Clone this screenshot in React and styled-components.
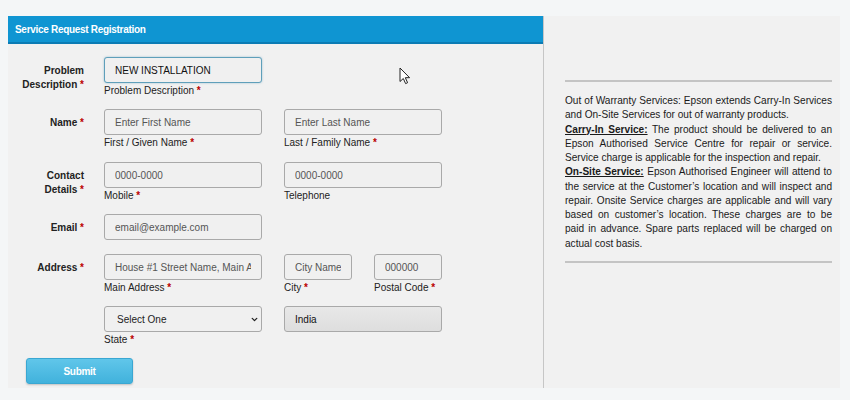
import styled, { createGlobalStyle } from "styled-components";
import { ChevronDown } from "lucide-react";

const GlobalStyle = createGlobalStyle`
  body {
    margin: 0;
    background: #f4f6f7;
    font-family: "Liberation Sans", Arial, sans-serif;
  }
`;

const Page = styled.div`
  padding: 16px 10px 12px 8px;
`;

const Frame = styled.div`
  position: relative;
  display: flex;
  height: 372px;
  background: #f1f1f1;
`;

const FormPanel = styled.div`
  width: 535px;
  display: flex;
  flex-direction: column;
  border-right: 1px solid #c6c6c6;
`;

const Header = styled.div`
  height: 28px;
  box-sizing: border-box;
  display: flex;
  align-items: center;
  padding-left: 7px;
  background: #0f95d2;
  border-bottom: 2px solid #0b7bb4;
  color: #fff;
  font-size: 10px;
  font-weight: 700;
  letter-spacing: -0.3px;
`;

const Form = styled.form`
  padding-top: 13px;
  display: flex;
  flex-direction: column;
`;

const Row = styled.div`
  display: grid;
  grid-template-columns: 76px 1fr;
  column-gap: 20px;
  margin-bottom: ${(p) => p.$mb ?? 11}px;
`;

const Label = styled.div`
  padding-top: 7px;
  text-align: right;
  font-size: 10px;
  font-weight: 700;
  line-height: 14px;
  color: #222;
`;

const Req = styled.span`
  color: #b00;
  font-weight: 700;
`;

const Fields = styled.div`
  display: flex;
  gap: 22px;
`;

const Field = styled.div`
  display: flex;
  flex-direction: column;
`;

const Input = styled.input`
  width: ${(p) => p.$w ?? 158}px;
  height: 26px;
  box-sizing: border-box;
  padding: 0 10px;
  border: 1px solid ${(p) => (p.$focused ? "#5f9fba" : "#a9a9a9")};
  border-radius: 3px;
  background: ${(p) =>
    p.disabled ? "linear-gradient(#e8e8e8, #dedede)" : "#f0f0f0"};
  box-shadow: ${(p) =>
    p.$focused ? "0 0 2px rgba(60, 140, 180, 0.5)" : "none"};
  font-family: inherit;
  font-size: 10px;
  color: #111;
  outline: none;
  &::placeholder {
    color: #555;
  }
`;

const SelectWrap = styled.div`
  position: relative;
  width: 158px;
  height: 26px;
`;

const Select = styled.select`
  appearance: none;
  width: 100%;
  height: 100%;
  box-sizing: border-box;
  padding: 0 0 0 12px;
  border: 1px solid #a9a9a9;
  border-radius: 3px;
  background: #f0f0f0;
  font-family: inherit;
  font-size: 10px;
  color: #222;
  outline: none;
`;

const Chevron = styled(ChevronDown)`
  position: absolute;
  right: 3px;
  top: 9px;
  pointer-events: none;
  color: #222;
`;

const SubLabel = styled.div`
  margin-top: 1px;
  font-size: 10px;
  line-height: 14px;
  color: #222;
`;

const Submit = styled.button`
  margin-left: 18px;
  width: 107px;
  height: 26px;
  border: 1px solid #3aa7d2;
  border-radius: 3px;
  background: linear-gradient(#60c6ea, #41b2dc);
  box-shadow: 0 1px 2px rgba(0, 0, 0, 0.2);
  color: #fff;
  font-family: inherit;
  font-size: 10px;
  font-weight: 700;
  letter-spacing: -0.3px;
`;

const InfoPanel = styled.div`
  flex: 1;
  padding: 64px 8px 0 21px;
`;

const Rule = styled.div`
  border-top: 2px solid #c4c4c4;
`;

const Info = styled.div`
  margin: 12px 0 10px;
  font-size: 10.1px;
  line-height: 14.25px;
  color: #1a1a1a;
  text-align: justify;
`;

const Term = styled.span`
  font-weight: 700;
  text-decoration: underline;
`;

const Cursor = styled.svg`
  position: absolute;
  left: 391px;
  top: 51px;
`;

const FormField = ({ label, required, w, placeholder, value, focused, disabled }) => (
  <Field>
    <Input
      $w={w}
      $focused={focused}
      placeholder={placeholder}
      defaultValue={value}
      disabled={disabled}
    />
    {label !== undefined && (
      <SubLabel>
        {label}
        {required && <Req> *</Req>}
      </SubLabel>
    )}
  </Field>
);

export default function App() {
  return (
    <>
      <GlobalStyle />
      <Page>
        <Frame>
          <FormPanel>
            <Header>Service Request Registration</Header>
            <Form onSubmit={(e) => e.preventDefault()}>
              <Row>
                <Label>
                  Problem
                  <br />
                  Description <Req>*</Req>
                </Label>
                <Fields>
                  <FormField
                    value="NEW INSTALLATION"
                    focused
                    label="Problem Description"
                    required
                  />
                </Fields>
              </Row>
              <Row $mb={12}>
                <Label>
                  Name <Req>*</Req>
                </Label>
                <Fields>
                  <FormField placeholder="Enter First Name" label="First / Given Name" required />
                  <FormField placeholder="Enter Last Name" label="Last / Family Name" required />
                </Fields>
              </Row>
              <Row>
                <Label>
                  Contact
                  <br />
                  Details <Req>*</Req>
                </Label>
                <Fields>
                  <FormField placeholder="0000-0000" label="Mobile" required />
                  <FormField placeholder="0000-0000" label="Telephone" />
                </Fields>
              </Row>
              <Row $mb={14}>
                <Label>
                  Email <Req>*</Req>
                </Label>
                <Fields>
                  <FormField placeholder="email@example.com" />
                </Fields>
              </Row>
              <Row>
                <Label>
                  Address <Req>*</Req>
                </Label>
                <Fields>
                  <FormField
                    placeholder="House #1 Street Name, Main Area"
                    label="Main Address"
                    required
                  />
                  <FormField w={68} placeholder="City Name" label="City" required />
                  <FormField w={68} placeholder="000000" label="Postal Code" required />
                </Fields>
              </Row>
              <Row>
                <div />
                <Fields>
                  <Field>
                    <SelectWrap>
                      <Select defaultValue="">
                        <option value="">Select One</option>
                      </Select>
                      <Chevron size={9} strokeWidth={3.5} />
                    </SelectWrap>
                    <SubLabel>
                      State<Req> *</Req>
                    </SubLabel>
                  </Field>
                  <FormField value="India" disabled />
                </Fields>
              </Row>
              <div>
                <Submit type="submit">Submit</Submit>
              </div>
            </Form>
          </FormPanel>
          <InfoPanel>
            <Rule />
            <Info>
              <div>
                Out of Warranty Services: Epson extends Carry-In Services and
                On-Site Services for out of warranty products.
              </div>
              <div>
                <Term>Carry-In Service:</Term> The product should be delivered
                to an Epson Authorised Service Centre for repair or service.
                Service charge is applicable for the inspection and repair.
              </div>
              <div>
                <Term>On-Site Service:</Term> Epson Authorised Engineer will
                attend to the service at the Customer’s location and will
                inspect and repair. Onsite Service charges are applicable and
                will vary based on customer’s location. These charges are to be
                paid in advance. Spare parts replaced will be charged on actual
                cost basis.
              </div>
            </Info>
            <Rule />
          </InfoPanel>
          <Cursor width="12" height="18" viewBox="0 0 12 18">
            <path
              d="M1 1 L1 14.5 L4.3 11.5 L6.6 16.6 L8.6 15.7 L6.3 10.7 L10.6 10.7 Z"
              fill="#fff"
              stroke="#222"
              strokeWidth="1"
              strokeLinejoin="round"
            />
          </Cursor>
        </Frame>
      </Page>
    </>
  );
}
